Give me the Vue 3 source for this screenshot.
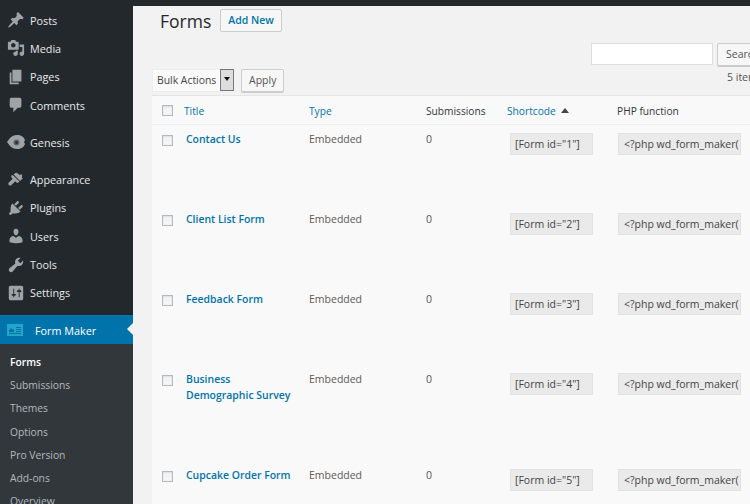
<script setup>
const menu1 = [
  { n: 'Posts', d: 'M10.440 3.020l1.820-1.820 6.360 6.350-1.830 1.820c-1.050-.68-2.480-.57-3.410.36l-.75.75c-.92.93-1.040 2.350-.35 3.410l-1.830 1.820-2.410-2.410-2.800 2.790c-.42.42-3.380 2.710-3.800 2.290s1.860-3.390 2.280-3.810l2.790-2.790L4.100 9.360l1.830-1.820c1.050.69 2.480.57 3.410-.36l.75-.75c.93-.92 1.040-2.350.35-3.410z' },
  { n: 'Media', d: 'M13 11V4c0-.55-.45-1-1-1h-1.670L9 1H5L3.670 3H2c-.55 0-1 .45-1 1v7c0 .55.45 1 1 1h10c.55 0 1-.45 1-1zM7 4.500c1.380 0 2.500 1.120 2.500 2.500S8.380 9.500 7 9.500 4.500 8.380 4.500 7 5.620 4.500 7 4.500zM14 6h5v10.500c0 1.380-1.120 2.500-2.500 2.500S14 17.880 14 16.500s1.120-2.500 2.500-2.500c.17 0 .34.02.5.05V9h-3V6zm-4 8.050V13h2v3.500c0 1.380-1.120 2.500-2.500 2.500S7 17.880 7 16.500 8.120 14 9.500 14c.17 0 .34.02.5.05z' },
  { n: 'Pages', d: 'M6 15V2h10v13H6zm-1 1h8v2H3V5h2v11z' },
  { n: 'Comments', d: 'M5 2h9c1.100 0 2 .9 2 2v7c0 1.100-.9 2-2 2h-2l-5 5v-5H5c-1.100 0-2-.9-2-2V4c0-1.100.9-2 2-2z' },
]
const menu2 = [
  { n: 'Appearance', d: 'M14.480 11.060L7.410 3.990l1.500-1.500c.78-.79 2.050-.79 2.830 0l1.760 1.760 3.500-.5-.5 3.500 1 1-1.500 1.500zM6.700 4.700l7.070 7.070-.71.71c-.78.78-2.050.78-2.830 0l-1.060-1.060-4.240 4.240c-.78.78-2.050.78-2.830 0s-.78-2.050 0-2.830l4.240-4.240-1.060-1.060c-.78-.78-.78-2.050 0-2.830z' },
  { n: 'Plugins', d: 'M13.110 4.360L9.870 7.600 8 5.730l3.240-3.240c.35-.34 1.050-.2 1.560.32.52.51.66 1.210.31 1.550zm-8 1.770l.91-1.120 9.010 9.010-1.190.84c-.71.71-2.630 1.160-3.820 1.160H6.140L4.900 17.260c-.59.59-1.540.59-2.120 0-.59-.58-.59-1.530 0-2.120l1.240-1.240v-3.880c0-1.130.4-3.050 1.090-3.890zm7.260 3.970l3.240-3.240c.34-.35 1.040-.21 1.550.31.52.51.66 1.210.31 1.550l-3.240 3.250z' },
  { n: 'Users', d: 'M10 9.250c-2.270 0-2.730-3.440-2.730-3.440C7 4.020 7.820 2 9.970 2c2.160 0 2.980 2.020 2.710 3.810 0 0-.41 3.440-2.680 3.440zm0 2.570L12.720 10c2.390 0 4.520 2.330 4.520 4.530v2.490s-3.650 1.130-7.240 1.130c-3.650 0-7.240-1.130-7.240-1.130v-2.490c0-2.250 1.940-4.480 4.470-4.480z' },
  { n: 'Tools', d: 'M16.680 9.770c-1.340 1.340-3.300 1.670-4.950.99l-5.410 6.520c-.99.99-2.590.99-3.570 0-.99-.98-.99-2.580 0-3.570l6.520-5.420c-.68-1.650-.35-3.610.99-4.950 1.280-1.280 3.120-1.620 4.720-1.060l-2.890 2.890 2.820 2.820 2.860-2.860c.53 1.580.18 3.390-1.090 4.640z' },
  { n: 'Settings', d: 'M18 16V4c0-1.100-.9-2-2-2H4c-1.100 0-2 .9-2 2v12c0 1.100.9 2 2 2h12c1.100 0 2-.9 2-2zM8 11h1c.55 0 1 .45 1 1s-.45 1-1 1H8v1.500c0 .28-.22.5-.5.5s-.5-.22-.5-.5V13H6c-.55 0-1-.45-1-1s.45-1 1-1h1V5.500c0-.28.22-.5.5-.5s.5.22.5.5V11zm5-2h-1c-.55 0-1-.45-1-1s.45-1 1-1h1V5.500c0-.28.22-.5.5-.5s.5.22.5.5V7h1c.55 0 1 .45 1 1s-.45 1-1 1h-1v5.500c0 .28-.22.5-.5.5s-.5-.22-.5-.5V9z' },
]
const subs = ['Forms', 'Submissions', 'Themes', 'Options', 'Pro Version', 'Add-ons', 'Overview']
const rows = [
  { id: 1, title: ['Contact Us'] },
  { id: 2, title: ['Client List Form'] },
  { id: 3, title: ['Feedback Form'] },
  { id: 4, title: ['Business', 'Demographic Survey'], tall: true },
  { id: 5, title: ['Cupcake Order Form'] },
]
</script>

<template>
  <div class="page">
    <div class="topbar"></div>
    <div class="body">
      <aside class="side">
        <ul class="menu">
          <li v-for="m in menu1" :key="m.n" class="item">
            <svg class="ico" viewBox="0 0 20 20"><path :d="m.d" /></svg>
            <span>{{ m.n }}</span>
          </li>
        </ul>
        <div class="item genesis">
          <svg class="ico" viewBox="0 0 18 18">
            <path d="M0 9l3-4c2-2 4-3 7-3 4 0 7 2 8 5l-1 2 1 2c-1 3-4 5-8 5-3 0-5-1-7-3z" />
            <circle cx="9.500" cy="9.500" r="3" fill="#5f6468" />
            <circle cx="9.500" cy="9.500" r="1.500" fill="#2b3035" />
          </svg>
          <span>Genesis</span>
        </div>
        <ul class="menu two">
          <li v-for="m in menu2" :key="m.n" class="item">
            <svg class="ico" viewBox="0 0 20 20"><path :d="m.d" /></svg>
            <span>{{ m.n }}</span>
          </li>
        </ul>
        <div class="item active">
          <svg class="ico fm" viewBox="0 0 16 12">
            <rect width="16" height="12" fill="#22a4cf" />
            <path d="M2 7l2-3 2 2 1-1v3H2zM9 3h5v1H9zM9 5h5v1H9zM9 7h5v1H9zM2 9h12v1H2z" fill="#0b6f9c" />
          </svg>
          <span>Form Maker</span>
          <i class="notch"></i>
        </div>
        <ul class="sub">
          <li v-for="(s, i) in subs" :key="s" :class="{ cur: i === 0 }">{{ s }}</li>
        </ul>
      </aside>
      <main class="main">
        <div class="head">
          <h1>Forms</h1>
          <a class="add">Add New</a>
        </div>
        <div class="searchrow">
          <div class="search"></div>
          <div class="btn searchbtn">Search</div>
        </div>
        <div class="count">5 items</div>
        <div class="bulk">
          <div class="select">Bulk Actions<b class="arrow"></b></div>
          <div class="btn apply">Apply</div>
        </div>
        <div class="table">
          <div class="row thead">
            <div class="c0"><i class="check"></i></div>
            <div class="c1 link">Title</div>
            <div class="c2 link">Type</div>
            <div class="c3">Submissions</div>
            <div class="c4 link">Shortcode<i class="up"></i></div>
            <div class="c5">PHP function</div>
          </div>
          <div v-for="r in rows" :key="r.id" class="row tr" :class="{ tall: r.tall }">
            <div class="c0"><i class="check"></i></div>
            <div class="c1 title"><div v-for="t in r.title" :key="t">{{ t }}</div></div>
            <div class="c2">Embedded</div>
            <div class="c3">0</div>
            <div class="c4"><div class="code">[Form id="{{ r.id }}"]</div></div>
            <div class="c5"><div class="code php">&lt;?php wd_form_maker(</div></div>
          </div>
        </div>
      </main>
    </div>
  </div>
</template>

<style>
html, body { margin: 0; overflow: hidden; background: #f1f1f1; }
</style>

<style scoped>
.page { width: 750px; height: 504px; overflow: hidden; background: #f2f2f2; font-family: "Open Sans", sans-serif; font-size: 11px; color: #444; }
.topbar { height: 6px; background: #23282d; }
.body { display: flex; height: 498px; }
.side { width: 133px; flex: none; background: #23282d; color: #eee; }
ul { list-style: none; margin: 0; padding: 0; }
.item { height: 28.3px; display: flex; align-items: center; padding-left: 7px; gap: 5px; position: relative; color: #e6e8ea; font-size: 10.800px; }
.ico { width: 18px; height: 18px; fill: #9ea3a8; flex: none; }
.genesis { margin-top: 9px; margin-bottom: 9px; }
.active { background: #0073aa; color: #fff; margin-top: 8.100px; height: 29px; padding-top: 1px; box-sizing: border-box; }
.fm { width: 16px; height: 12px; margin-right: 7px; margin-left: 0; }
.notch { position: absolute; right: 0; top: 8px; border: 6px solid transparent; border-right-color: #f2f2f2; border-left: 0; }
.sub { background: #32373c; padding-top: 7px; height: 160px; }
.sub li { height: 23.2px; line-height: 23.2px; padding-left: 10px; color: #b4b9be; font-size: 10.300px; }
.sub .cur { color: #fff; font-weight: 600; }
.main { flex: 1; min-width: 0; padding-left: 19px; position: relative; }
.head { display: flex; align-items: center; height: 29px; padding-left: 8px; gap: 9px; }
h1 { margin: 0; font-size: 17.500px; font-weight: 400; color: #23282d; }
.add { border: 1px solid #ccc; background: #f7f7f7; color: #0073aa; font-size: 10.500px; font-weight: 600; height: 21px; line-height: 21px; padding: 0 7px; border-radius: 2px; }
.searchrow { position: absolute; top: 37px; left: 458px; display: flex; gap: 4px; }
.search { width: 120px; height: 20px; background: #fff; border: 1px solid #ddd; }
.btn { border: 1px solid #ccc; background: #f7f7f7; border-radius: 2px; color: #555; font-size: 10.500px; box-shadow: 0 1px 0 #ccc; }
.searchbtn { height: 21px; line-height: 21px; padding: 0 8px; width: 60px; }
.count { position: absolute; top: 64px; left: 594px; white-space: nowrap; font-size: 10.500px; color: #555; }
.bulk { display: flex; margin-top: 34px; height: 23px; gap: 7px; align-items: flex-start; }
.select { width: 82px; height: 23px; line-height: 21px; background: #fafafa; padding-left: 4px; position: relative; font-size: 10.400px; color: #444; box-sizing: border-box; border: 1px solid #eee; }
.arrow { position: absolute; right: -1px; top: -1px; width: 14px; height: 22px; border: 1px solid #777; background: #ddd; box-sizing: border-box; }
.arrow::after { content: ""; position: absolute; left: 3px; top: 7px; border: 3px solid transparent; border-top: 4px solid #111; border-bottom: 0; }
.apply { height: 21px; line-height: 21px; padding: 0 7px; }
.table { margin-top: 3px; background: #f9f9f9; border-top: 1px solid #e5e5e5; width: 640px; }
.row { display: flex; }
.thead { height: 29px; padding-top: 2px; align-items: center; border-bottom: 1px solid #eee; box-sizing: border-box; color: #32373c; font-size: 10.200px; }
.tr { height: 80px; padding-top: 6px; box-sizing: border-box; font-size: 10.500px; color: #555; }
.tall { height: 96px; }
.c0 { width: 32px; padding-left: 10px; box-sizing: border-box; flex: none; }
.c1 { width: 125px; flex: none; box-sizing: border-box; }
.c2 { width: 117px; flex: none; box-sizing: border-box; }
.c3 { width: 81px; flex: none; box-sizing: border-box; }
.c4 { width: 110px; flex: none; box-sizing: border-box; }
.c5 { flex: 1; white-space: nowrap; }
.link { color: #0073aa; }
.title { color: #0073aa; font-weight: 600; line-height: 16px; padding-left: 2px; font-size: 10.450px; }
.tr .c2, .tr .c3 { line-height: 16px; padding-left: 1px; }
.tr .c1 { width: 124px; }
.tr .c2 { color: #5f5757; }
.tr .c3 { width: 82px; }
.check { display: block; width: 9px; height: 9px; border: 1px solid #b4b9be; background: #f4f4f4; box-shadow: inset 0 1px 2px rgba(0,0,0,.1); }
.thead .check { margin-top: -2px; }
.tr .check { margin-top: 4px; }
.up { display: inline-block; margin-left: 5px; margin-bottom: 2px; border: 4px solid transparent; border-bottom: 5px solid #444; border-top: 0; }
.code { background: #eaeaea; border: 1px solid #e2e2e2; height: 22px; line-height: 20px; width: 83px; box-sizing: border-box; padding-left: 4px; font-size: 10.500px; color: #444; margin-left: 3px; margin-top: 2px; }
.php { width: 123px; overflow: hidden; padding-left: 5px; margin-left: 1px; }
</style>
